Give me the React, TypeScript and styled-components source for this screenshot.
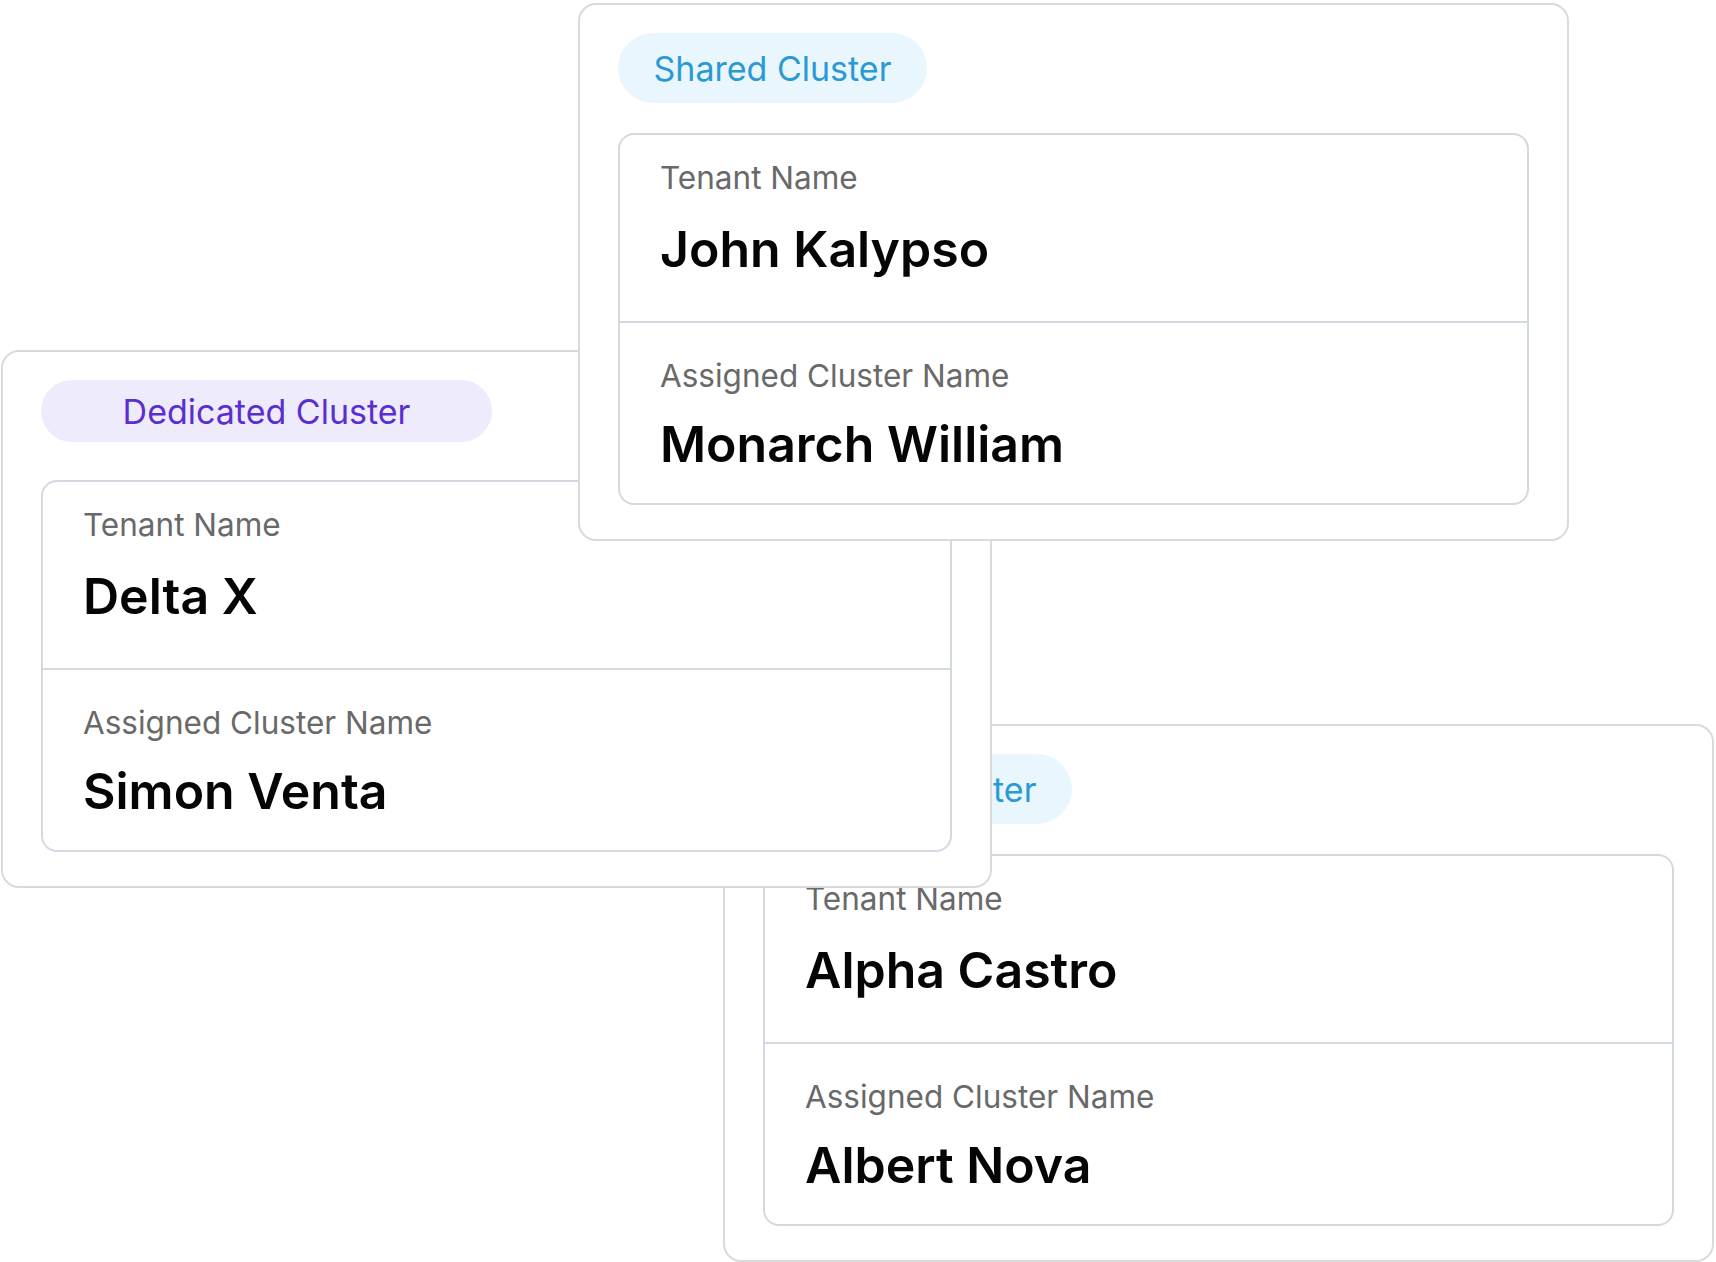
import styled, { createGlobalStyle } from "styled-components";

type Kind = "shared" | "dedicated";

type CardData = {
  kind: Kind;
  label: string;
  tenant: string;
  cluster: string;
  x: number;
  y: number;
};

// bottom card first, so the later ones sit over it
const cards: CardData[] = [
  { kind: "shared", label: "Shared Cluster", tenant: "Alpha Castro", cluster: "Albert Nova", x: 723, y: 724 },
  { kind: "dedicated", label: "Dedicated Cluster", tenant: "Delta X", cluster: "Simon Venta", x: 1, y: 350 },
  { kind: "shared", label: "Shared Cluster", tenant: "John Kalypso", cluster: "Monarch William", x: 578, y: 3 },
];

const pillStyles = {
  shared: { bg: "#eaf6fd", color: "#2a9ad4", width: 309, height: 70 },
  dedicated: { bg: "#eeebfc", color: "#5a2fd1", width: 451, height: 62 },
};

function App() {
  return (
    <>
      <GlobalStyle />
      <Canvas>
        {cards.map((card) => (
          <Card key={card.tenant} style={{ left: card.x, top: card.y }}>
            <PillRow>
              <Pill $kind={card.kind}>{card.label}</Pill>
            </PillRow>
            <InfoBox>
              <TenantSection>
                <Label>Tenant Name</Label>
                <Value>{card.tenant}</Value>
              </TenantSection>
              <ClusterSection>
                <Label>Assigned Cluster Name</Label>
                <Value>{card.cluster}</Value>
              </ClusterSection>
            </InfoBox>
          </Card>
        ))}
      </Canvas>
    </>
  );
}

const GlobalStyle = createGlobalStyle`
  body {
    margin: 0;
    background: #ffffff;
    font-family: Inter, "Noto Sans", sans-serif;
  }
`;

const Canvas = styled.div`
  position: relative;
  width: 1716px;
  height: 1262px;
  overflow: hidden;
`;

const Card = styled.div`
  position: absolute;
  box-sizing: border-box;
  width: 991px;
  height: 538px;
  padding: 28px 38px 34px;
  display: flex;
  flex-direction: column;
  background: #ffffff;
  border: 2px solid #dadada;
  border-radius: 18px;
`;

const PillRow = styled.div`
  height: 100px;
  display: flex;
  align-items: flex-start;
`;

const Pill = styled.div<{ $kind: Kind }>`
  box-sizing: border-box;
  width: ${(p) => pillStyles[p.$kind].width}px;
  height: ${(p) => pillStyles[p.$kind].height}px;
  display: flex;
  align-items: center;
  justify-content: center;
  border-radius: 999px;
  background: ${(p) => pillStyles[p.$kind].bg};
  color: ${(p) => pillStyles[p.$kind].color};
  font-size: 34px;
  font-weight: 400;
  white-space: nowrap;
`;

const InfoBox = styled.div`
  flex: 1;
  display: flex;
  flex-direction: column;
  border: 2px solid #d3d9e1;
  border-radius: 16px;
`;

const TenantSection = styled.div`
  height: 186px;
  box-sizing: border-box;
  display: flex;
  flex-direction: column;
  gap: 23px;
  padding: 25px 40px 0;
`;

const ClusterSection = styled(TenantSection)`
  height: auto;
  flex: 1;
  gap: 20px;
  padding-top: 35px;
  border-top: 2px solid #d3d9e1;
`;

const Label = styled.div`
  font-size: 31.5px;
  line-height: 36px;
  color: #696969;
  white-space: nowrap;
`;

const Value = styled.div`
  font-size: 50px;
  line-height: 60px;
  font-weight: 600;
  color: #050505;
  white-space: nowrap;
`;

export default App;
